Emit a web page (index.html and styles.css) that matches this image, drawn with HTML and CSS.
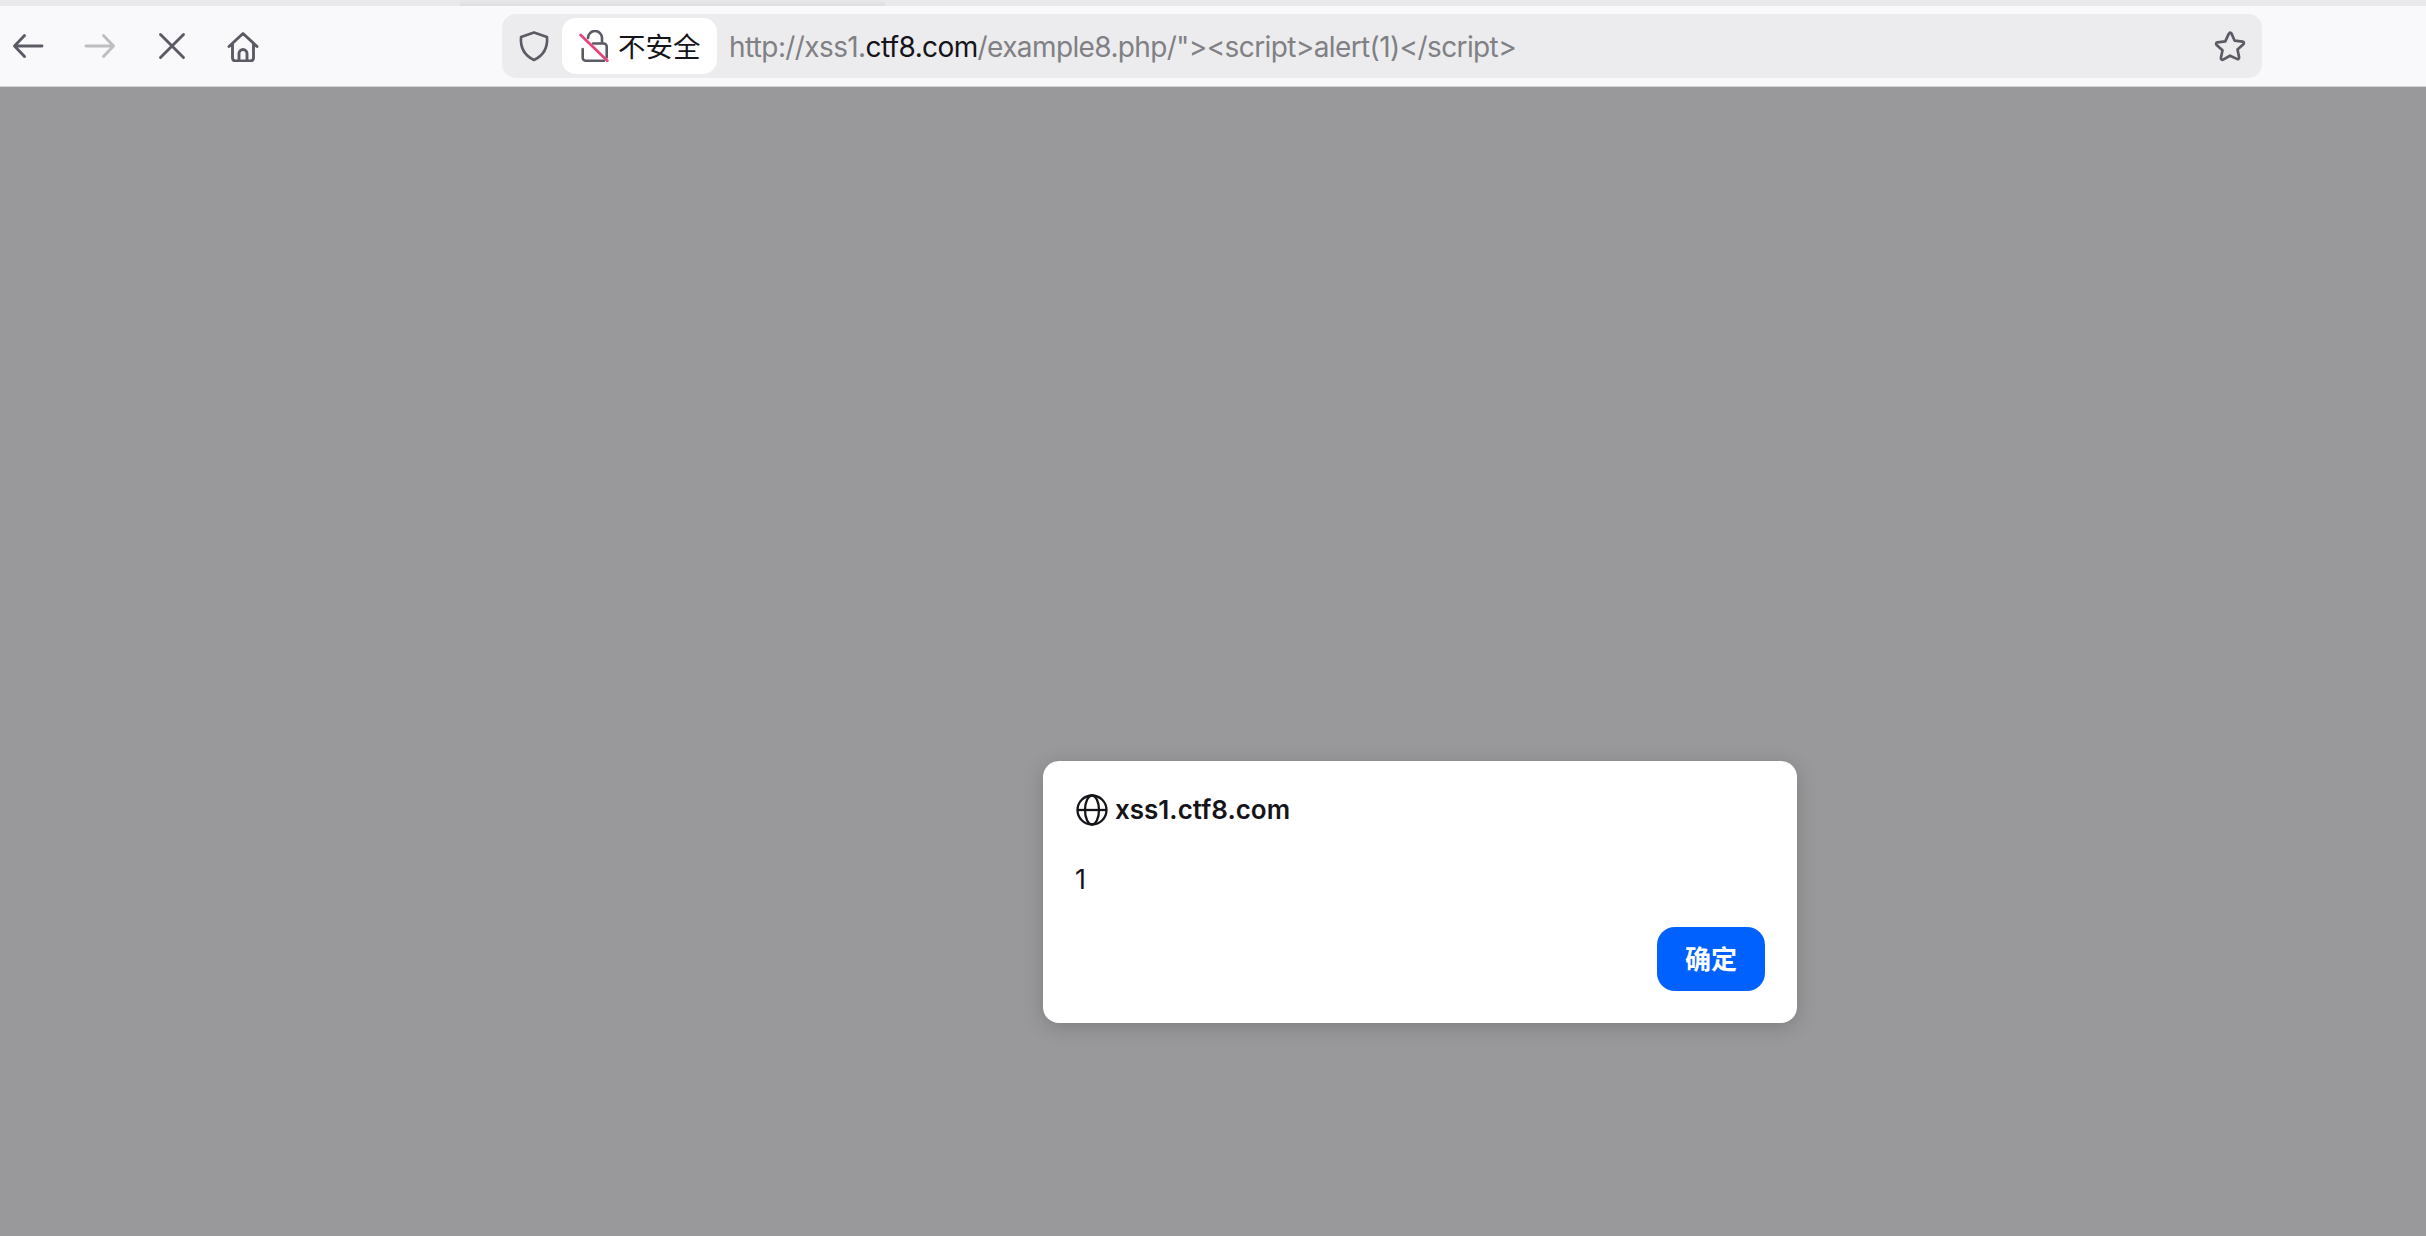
FILE: index.html
```html
<!DOCTYPE html>
<html lang="zh">
<head>
<meta charset="utf-8">
<title>xss1.ctf8.com</title>
<link rel="stylesheet" href="styles.css">
</head>
<body>
<div class="tabstrip"><div class="tab-shadow"></div></div>
<header class="toolbar">
  <nav class="nav">
    <svg class="ico ico-back" viewBox="0 0 32 32"><path d="M30 16H3M12.500 5.500 2.500 16l10 10.500"/></svg>
    <svg class="ico ico-fwd" viewBox="0 0 32 32"><path d="M2 16h27M19.500 5.500 29.500 16l-10 10.500"/></svg>
    <svg class="ico ico-stop" viewBox="0 0 32 32"><path d="M4.500 4.500l23 23M27.500 4.500l-23 23"/></svg>
    <svg class="ico ico-home" viewBox="0 0 32 32"><path d="M2 16.500 16 3.500l14 13M5.500 14v14a3 3 0 0 0 3 3h15a3 3 0 0 0 3-3V14M12 31v-7.500a4 4 0 0 1 8 0V31"/></svg>
  </nav>
  <div class="urlbar">
    <svg class="shield" viewBox="0 0 32 32"><path d="M16 2.500 29 7c.8 10-2.500 18-13 23C5.500 25 2.200 17 3 7z"/></svg>
    <div class="badge">
      <svg class="lock" viewBox="0 0 30 32"><path class="lock-body" d="M3.700 19v8.700a3 3 0 0 0 3 3H25M27.700 27.500v-11a3 3 0 0 0-3-3H14M9 8V8a7 7 0 0 1 14 0v5.300"/><path class="lock-slash" d="M1.700 5 28.300 30.700"/></svg>
      <span class="badge-text">不安全</span>
    </div>
    <div class="url"><span class="dim">http://xss1.</span><span class="host">ctf8.com</span><span class="dim">/example8.php/"&gt;&lt;script&gt;alert(1)&lt;/script&gt;</span></div>
    <svg class="star" viewBox="0 0 32 32"><path d="M16 2.500a1.500 1.500 0 0 1 1.400.9l3.300 7.300 7.900.9a1.500 1.500 0 0 1 .8 2.600l-5.900 5.300 1.600 7.800a1.500 1.500 0 0 1-2.200 1.600L16 25.700l-6.900 3.900a1.500 1.500 0 0 1-2.200-1.600l1.600-7.800-5.900-5.300a1.500 1.500 0 0 1 .8-2.600l7.900-.9 3.300-7.300a1.500 1.500 0 0 1 1.400-.9z"/></svg>
  </div>
</header>
<main class="content">
  <section class="dialog">
    <div class="dialog-title">
      <svg class="globe" viewBox="0 0 32 32"><circle cx="16" cy="16" r="14.500"/><ellipse cx="16" cy="16" rx="7" ry="14.500"/><path d="M1.500 16h29"/></svg>
      <span>xss1.ctf8.com</span>
    </div>
    <p class="dialog-msg">1</p>
    <div class="dialog-actions"><button class="ok">确定</button></div>
  </section>
</main>
</body>
</html>
```
FILE: styles.css
```css
* { box-sizing: border-box; }
html, body { margin: 0; height: 100%; overflow: hidden; }
body {
  display: flex;
  flex-direction: column;
  font-family: Inter, "Noto Sans CJK SC", sans-serif;
  background: #99999b;
}
.tabstrip { height: 6px; background: #e9e9eb; padding-left: 460px; flex: none; }
.tab-shadow { width: 425px; height: 6px; background: linear-gradient(#e9e9eb, #dedee0); }
.toolbar {
  height: 81px;
  flex: none;
  display: flex;
  align-items: flex-start;
  background: #f9f9fb;
  border-bottom: 1px solid #d4d4d6;
  padding-top: 8px;
}
.nav { width: 502px; height: 64px; display: flex; align-items: center; }
.ico { width: 32px; height: 32px; fill: none; stroke: #5b5b66; stroke-width: 2.900; stroke-linecap: round; stroke-linejoin: round; flex: none; }
.ico-back { margin-left: 12px; }
.ico-fwd { margin-left: 40px; stroke: #bdbdc2; }
.ico-stop { margin-left: 40px; }
.ico-home { margin-left: 39px; }
.urlbar {
  width: 1760px;
  height: 64px;
  background: #ececee;
  border-radius: 14px;
  display: flex;
  align-items: center;
  padding-left: 16px;
  padding-right: 16px;
}
.shield { width: 32px; height: 32px; fill: none; stroke: #5b5b66; stroke-width: 2.600; stroke-linejoin: round; flex: none; }
.badge {
  width: 155px;
  height: 56px;
  margin-left: 12px;
  background: #fff;
  border-radius: 14px;
  display: flex;
  align-items: center;
  padding-left: 17px;
  flex: none;
}
.lock { width: 30px; height: 32px; flex: none; fill: none; }
.lock-body { stroke: #5b5b66; stroke-width: 2.600; stroke-linecap: round; }
.lock-slash { stroke: #e8457e; stroke-width: 2.800; stroke-linecap: round; }
.badge-text { margin-left: 9px; font-size: 27.500px; color: #15141a; font-family: "Noto Sans CJK SC", sans-serif; line-height: 1; }
.url { flex: 1; margin-left: 12px; padding-top: 2px; font-size: 28px; letter-spacing: -0.610px; white-space: nowrap; color: #808085; font-family: Inter, sans-serif; }
.host { color: #15141a; }
.star { width: 32px; height: 32px; fill: none; stroke: #5b5b66; stroke-width: 2.700; stroke-linejoin: round; flex: none; }
.content { flex: 1; position: relative; background: #99999b; }
.dialog {
  position: absolute;
  left: 1043px;
  top: 674px;
  width: 754px;
  height: 262px;
  background: #fff;
  border-radius: 16px;
  box-shadow: 0 4px 20px rgba(0,0,0,.18);
  padding: 32px 32px 32px;
  display: flex;
  flex-direction: column;
}
.dialog-title { display: flex; align-items: center; height: 32px; font-size: 26px; font-weight: 600; color: #15141a; }
.globe { width: 32px; height: 32px; fill: none; stroke: #15141a; stroke-width: 2.300; margin-right: 8px; flex: none; transform: translate(1px, 1px); }
.dialog-msg { margin: 39px 0 0; font-size: 27px; line-height: 32px; color: #15141a; }
.dialog-actions { margin-top: auto; display: flex; justify-content: flex-end; }
.ok {
  width: 108px;
  height: 64px;
  border: 0;
  border-radius: 18px;
  background: #0061ff;
  color: #fff;
  font-size: 26px;
  font-weight: 700;
  padding: 0 0 4px;
  font-family: "Noto Sans CJK SC", sans-serif;
}
```
